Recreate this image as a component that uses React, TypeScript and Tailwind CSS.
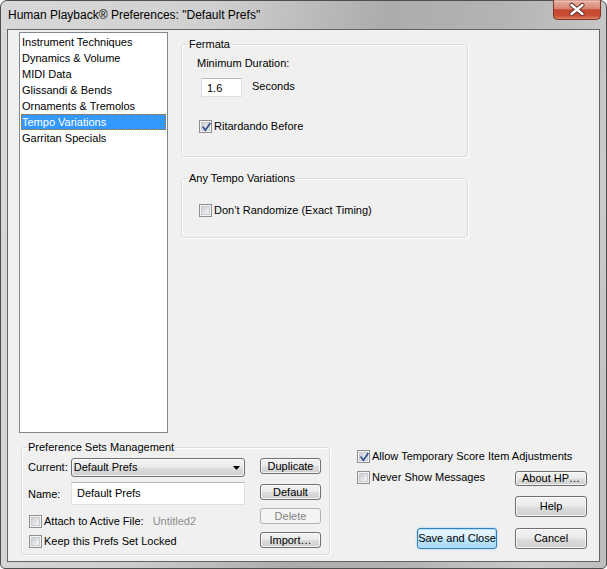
import React from "react";

function CheckBox({ checked = false }: { checked?: boolean }) {
  return (
    <span className="relative flex h-[13px] w-[13px] shrink-0 border border-[#8e8f8f] bg-[#f4f4f4] p-[1px]">
      <span className="flex-1 border border-[#c9cbce] bg-[linear-gradient(135deg,#c8ccd2_0%,#e2e4e7_55%,#f7f7f7_100%)]" />
      {checked && (
        <svg
          className="absolute left-[1px] top-[1px]"
          width="11"
          height="11"
          viewBox="0 0 11 11"
        >
          <path
            d="M2.2 5.2 L4.4 8.2 L8.8 1.8"
            fill="none"
            stroke="#36538f"
            strokeWidth="1.8"
            strokeLinecap="square"
          />
        </svg>
      )}
    </span>
  );
}

const btnNormal =
  "flex items-center justify-center rounded-[3px] border border-[#707070] bg-[linear-gradient(to_bottom,#f2f2f2_0%,#ebebeb_48%,#dddddd_52%,#cfcfcf_100%)] shadow-[inset_0_0_0_1px_rgba(255,255,255,0.75)] text-[11px] leading-[13px] text-black";

function Btn({
  children,
  className,
}: {
  children: React.ReactNode;
  className: string;
}) {
  return <div className={`${btnNormal} ${className}`}>{children}</div>;
}

const items = [
  "Instrument Techniques",
  "Dynamics & Volume",
  "MIDI Data",
  "Glissandi & Bends",
  "Ornaments & Tremolos",
  "Tempo Variations",
  "Garritan Specials",
];

export default function App() {
  return (
    <div className="h-[569px] w-[607px] font-['Liberation_Sans',Arial,sans-serif] text-[11px] leading-[13px] text-black">
      <div className="flex h-[569px] w-[607px] flex-col rounded-t-[7px] rounded-b-[5px] border border-[#4e4e4e] bg-[linear-gradient(100deg,#d8d8d8_0%,#d0d0d0_30%,#acacac_55%,#b4b4b4_72%,#cbcbcb_90%,#bdbdbd_100%)]">
        {/* Title bar */}
        <div className="flex h-[28px] shrink-0 items-center justify-between pl-[7px] pr-[5px]">
          <span className="pb-[1px] text-[12px] leading-[14px] text-black">
            Human Playback® Preferences: "Default Prefs"
          </span>
          <svg
            className="-mt-[1px] self-start"
            width="48"
            height="20"
            viewBox="0 0 48 20"
          >
            <defs>
              <linearGradient id="cg" x1="0" y1="0" x2="0" y2="1">
                <stop offset="0" stopColor="#eab3a6" />
                <stop offset="0.45" stopColor="#d88571" />
                <stop offset="0.5" stopColor="#c5482f" />
                <stop offset="0.8" stopColor="#c94f36" />
                <stop offset="1" stopColor="#e08a70" />
              </linearGradient>
            </defs>
            <path
              d="M0.5 0 L47.5 0 L47.5 15.5 Q47.5 19.5 43.5 19.5 L4.5 19.5 Q0.5 19.5 0.5 15.5 Z"
              fill="url(#cg)"
              stroke="#7f3426"
            />
            <path d="M1.5 1 L46.5 1" stroke="#f4cfc6" strokeWidth="1" />
            <path
              d="M18.5 5 L29.5 14 M29.5 5 L18.5 14"
              stroke="#5b2a22"
              strokeWidth="4.2"
              strokeLinecap="round"
            />
            <path
              d="M18.5 5 L29.5 14 M29.5 5 L18.5 14"
              stroke="#ffffff"
              strokeWidth="2.4"
              strokeLinecap="round"
            />
          </svg>
        </div>

        {/* Client area */}
        <div className="ml-[6px] flex h-[533px] w-[593px] flex-col border border-[#646464] bg-[#f0f0f0] pl-[11px] pt-[2px]">
          {/* Top row */}
          <div className="flex">
            <div className="h-[401px] w-[149px] border border-[#828790] bg-white pt-[1px]">
              {items.map((it) => {
                const sel = it === "Tempo Variations";
                return (
                  <div
                    key={it}
                    className={
                      sel
                        ? "mx-[1px] h-[16px] border border-dotted border-[#cc6600] bg-[#3399ff] leading-[14px] text-white"
                        : "mx-[1px] h-[16px] border border-transparent leading-[14px]"
                    }
                  >
                    {it}
                  </div>
                );
              })}
            </div>

            <div className="ml-[13px] mt-[6px] flex w-[287px] flex-col">
              <fieldset className="h-[119px] rounded-[3px] border border-[#d5dfe5] px-[6px] shadow-[inset_1px_1px_0_#ffffff,1px_1px_0_#ffffff]">
                <legend className="px-[1px] leading-[13px]">Fermata</legend>
                <div className="ml-[9px] mt-[6px]">Minimum Duration:</div>
                <div className="ml-[13px] mt-[8px] flex items-start">
                  <div className="h-[19px] w-[41px] border border-[#dbdfe6] border-t-[#b5b9c0] bg-white pl-[5px] pt-[3px] leading-[13px]">
                    1.6
                  </div>
                  <span className="ml-[10px] mt-[2px]">Seconds</span>
                </div>
                <div className="ml-[11px] mt-[23px] flex items-center gap-[2px]">
                  <CheckBox checked />
                  <span>Ritardando Before</span>
                </div>
              </fieldset>

              <fieldset className="mt-[15px] h-[66px] rounded-[3px] border border-[#d5dfe5] px-[6px] shadow-[inset_1px_1px_0_#ffffff,1px_1px_0_#ffffff]">
                <legend className="px-[1px] leading-[13px]">
                  Any Tempo Variations
                </legend>
                <div className="ml-[11px] mt-[19px] flex items-center gap-[2px]">
                  <CheckBox />
                  <span>Don’t Randomize (Exact Timing)</span>
                </div>
              </fieldset>
            </div>
          </div>

          {/* Bottom row */}
          <div className="mt-[8px] flex">
            <fieldset className="ml-[2px] h-[114px] w-[309px] rounded-[3px] border border-[#d5dfe5] px-[5px] shadow-[inset_1px_1px_0_#ffffff,1px_1px_0_#ffffff]">
              <legend className="px-[1px] leading-[13px]">
                Preference Sets Management
              </legend>
              <div className="flex">
                <div className="mt-[4px] flex w-[218px] flex-col">
                  <div className="flex h-[19px] items-center pl-[1px]">
                    <span className="w-[43px]">Current:</span>
                    <div className="flex h-[19px] w-[175px] items-center justify-between rounded-[3px] border border-[#707070] bg-[linear-gradient(to_bottom,#f2f2f2_0%,#ebebeb_48%,#dddddd_52%,#cfcfcf_100%)] pl-[2px] pr-[4px] shadow-[inset_0_0_0_1px_rgba(255,255,255,0.75)]">
                      <span>Default Prefs</span>
                      <svg width="7" height="4" viewBox="0 0 7 4">
                        <path d="M0 0 L7 0 L3.5 4 Z" fill="#000000" />
                      </svg>
                    </div>
                  </div>
                  <div className="mt-[5px] flex h-[23px] items-center pl-[1px]">
                    <span className="mt-[1px] w-[43px]">Name:</span>
                    <div className="h-[23px] w-[174px] border border-[#dbdfe6] border-t-[#b5b9c0] bg-white pl-[5px] pt-[4px] leading-[13px]">
                      Default Prefs
                    </div>
                  </div>
                  <div className="ml-[2px] mt-[10px] flex items-center gap-[2px]">
                    <CheckBox />
                    <span>Attach to Active File:</span>
                    <span className="ml-[7px] text-[#8d8d8d]">Untitled2</span>
                  </div>
                  <div className="ml-[2px] mt-[7px] flex items-center gap-[2px]">
                    <CheckBox />
                    <span>Keep this Prefs Set Locked</span>
                  </div>
                </div>
                <div className="ml-[15px] flex flex-col">
                  <Btn className="mt-[4px] h-[16px] w-[61px]">Duplicate</Btn>
                  <Btn className="mt-[10px] h-[16px] w-[61px]">Default</Btn>
                  <div className="mt-[8px] flex h-[16px] w-[61px] items-center justify-center rounded-[3px] border border-[#adb2b5] bg-[#f4f4f4] text-[#838383]">
                    Delete
                  </div>
                  <Btn className="mt-[8px] h-[16px] w-[61px]">Import…</Btn>
                </div>
              </div>
            </fieldset>

            <div className="ml-[27px] mt-[9px] flex w-[230px] flex-col">
              <div className="flex items-center gap-[2px]">
                <CheckBox checked />
                <span>Allow Temporary Score Item Adjustments</span>
              </div>
              <div className="mt-[8px] flex items-start justify-between">
                <div className="flex items-center gap-[2px]">
                  <CheckBox />
                  <span>Never Show Messages</span>
                </div>
                <Btn className="h-[15px] w-[72px]">About HP…</Btn>
              </div>
              <div className="mt-[10px] flex justify-end">
                <Btn className="h-[21px] w-[72px]">Help</Btn>
              </div>
              <div className="mt-[11px] flex justify-end gap-[18px]">
                <div className="flex h-[21px] w-[80px] items-center justify-center rounded-[3px] border border-[#3c7fb1] bg-[linear-gradient(to_bottom,#eaf6fd_0%,#d9f0fc_48%,#bee6fd_52%,#a7d9f5_100%)] shadow-[inset_0_0_0_1px_#a9e3ff,0_0_2px_#7fc7f0]">
                  Save and Close
                </div>
                <Btn className="h-[21px] w-[72px]">Cancel</Btn>
              </div>
            </div>
          </div>
        </div>
      </div>
    </div>
  );
}
